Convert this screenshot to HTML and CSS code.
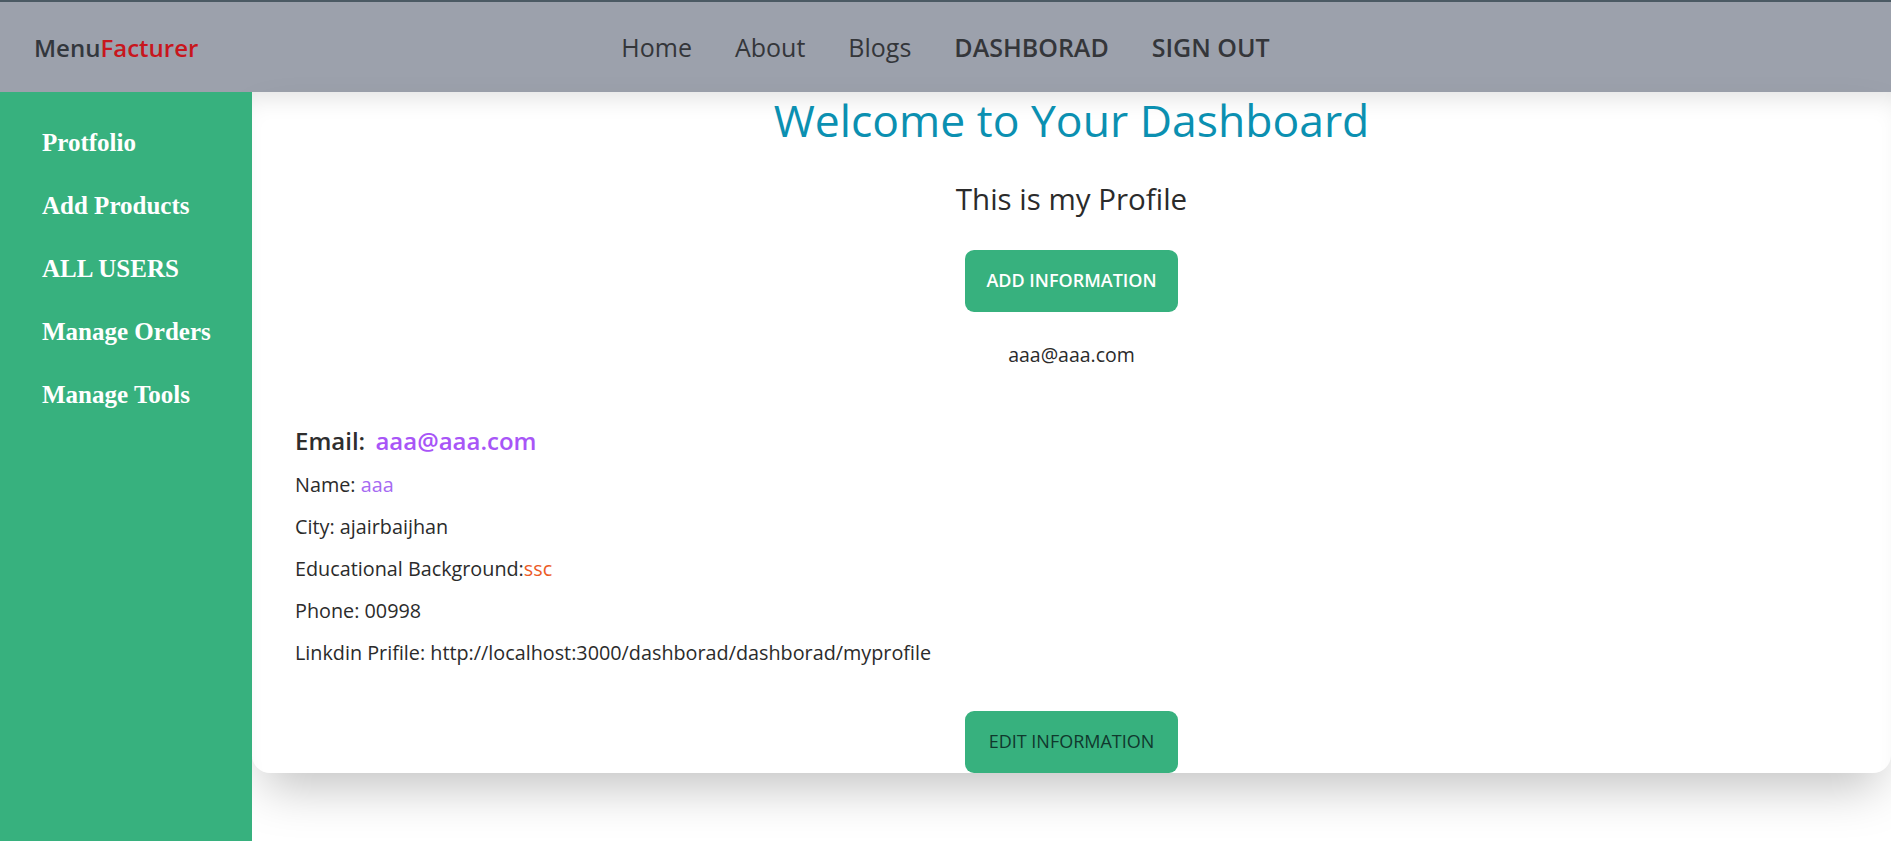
FILE: index.html
```html
<!DOCTYPE html>
<html lang="en">
<head>
<meta charset="utf-8">
<title>MenuFacturer Dashboard</title>
<link rel="stylesheet" href="styles.css">
</head>
<body>
<header class="navbar">
  <div class="logo"><span class="logo-a">Menu</span><span class="logo-b">Facturer</span></div>
  <nav class="nav-links">
    <a class="nav-link">Home</a>
    <a class="nav-link">About</a>
    <a class="nav-link">Blogs</a>
    <a class="nav-link strong">DASHBORAD</a>
    <a class="nav-link strong">SIGN OUT</a>
  </nav>
</header>
<div class="layout">
  <aside class="sidebar">
    <ul class="menu">
      <li>Protfolio</li>
      <li>Add Products</li>
      <li>ALL USERS</li>
      <li>Manage Orders</li>
      <li>Manage Tools</li>
    </ul>
  </aside>
  <main class="card">
    <h1 class="title">Welcome to Your Dashboard</h1>
    <h2 class="subtitle">This is my Profile</h2>
    <button class="btn btn-add">ADD INFORMATION</button>
    <p class="user-email">aaa@aaa.com</p>
    <div class="details">
      <h3 class="email-line">Email: <span class="purple">aaa@aaa.com</span></h3>
      <p class="row">Name: <span class="purple-light">aaa</span></p>
      <p class="row">City: ajairbaijhan</p>
      <p class="row">Educational Background:<span class="orange">ssc</span></p>
      <p class="row">Phone: 00998</p>
      <p class="row">Linkdin Prifile: http://localhost:3000/dashborad/dashborad/myprofile</p>
    </div>
    <button class="btn btn-edit">EDIT INFORMATION</button>
  </main>
</div>
</body>
</html>
```
FILE: styles.css
```css
* { box-sizing: border-box; }
html, body { margin: 0; padding: 0; }
body {
  background: #ffffff;
  font-family: "Open Sans", "Noto Sans", sans-serif;
  color: #333333;
  height: 841px;
  overflow: hidden;
}
.navbar {
  height: 92px;
  background: #9ca1ac;
  border-top: 2px solid #4b5a64;
  display: flex;
  align-items: center;
  padding-left: 34px;
}
.logo {
  font-size: 24px;
  font-weight: 600;
  width: 0;
  white-space: nowrap;
}
.logo-a { color: #33373d; }
.logo-b { color: #c8161d; }
.nav-links {
  flex: 1;
  display: flex;
  justify-content: center;
  gap: 43px;
  margin-left: -34px;
}
.nav-link {
  font-size: 25px;
  color: #34363a;
  font-weight: 400;
}
.nav-link.strong { font-weight: 600; }

.layout {
  display: flex;
  height: 749px;
}
.sidebar {
  width: 252px;
  flex: none;
  background: #37b17e;
  padding: 37px 0 0 42px;
  position: relative;
  z-index: 1;
}
.menu {
  list-style: none;
  margin: 0;
  padding: 0;
  display: flex;
  flex-direction: column;
  gap: 35px;
}
.menu li {
  font-family: "Liberation Serif", "Times New Roman", serif;
  font-weight: 700;
  font-size: 25px;
  line-height: 28px;
  color: #ffffff;
}
.card {
  flex: 1;
  height: 681px;
  background: #ffffff;
  border-radius: 0 0 18px 18px;
  box-shadow: inset 0 18px 26px -14px rgba(0,0,0,0.13), 0 25px 50px -12px rgba(0,0,0,0.25);
  display: flex;
  flex-direction: column;
  align-items: center;
}
.title {
  margin: 4px 0 0;
  font-size: 44.5px;
  line-height: 48px;
  font-weight: 400;
  color: #0b90b1;
}
.subtitle {
  margin: 37px 0 0;
  font-size: 29.5px;
  line-height: 36px;
  font-weight: 400;
  color: #2b2b2b;
}
.btn {
  width: 213px;
  height: 63px;
  border: none;
  border-radius: 9px;
  background: #37b17e;
  font-family: "Open Sans", "Noto Sans", sans-serif;
  font-size: 18px;
  padding: 0 0 3px;
}
.btn-add {
  margin-top: 33px;
  color: #ffffff;
  font-weight: 600;
}
.btn-edit {
  margin-top: 44px;
  color: #10382d;
  font-weight: 400;
}
.user-email {
  margin: 29px 0 0;
  font-size: 19.5px;
  line-height: 28px;
  color: #2b2b2b;
}
.details {
  align-self: stretch;
  padding-left: 43px;
  margin-top: 56px;
  display: flex;
  flex-direction: column;
  gap: 14px;
}
.email-line {
  margin: 0;
  font-size: 24px;
  line-height: 32px;
  font-weight: 600;
  color: #2e2e2e;
}
.email-line .purple { color: #a855f7; margin-left: 4px; }
.row {
  margin: 0;
  font-size: 19.8px;
  line-height: 28px;
  color: #2b2b2b;
}
.purple-light { color: #a66af2; }
.orange { color: #ec5a24; }
```
